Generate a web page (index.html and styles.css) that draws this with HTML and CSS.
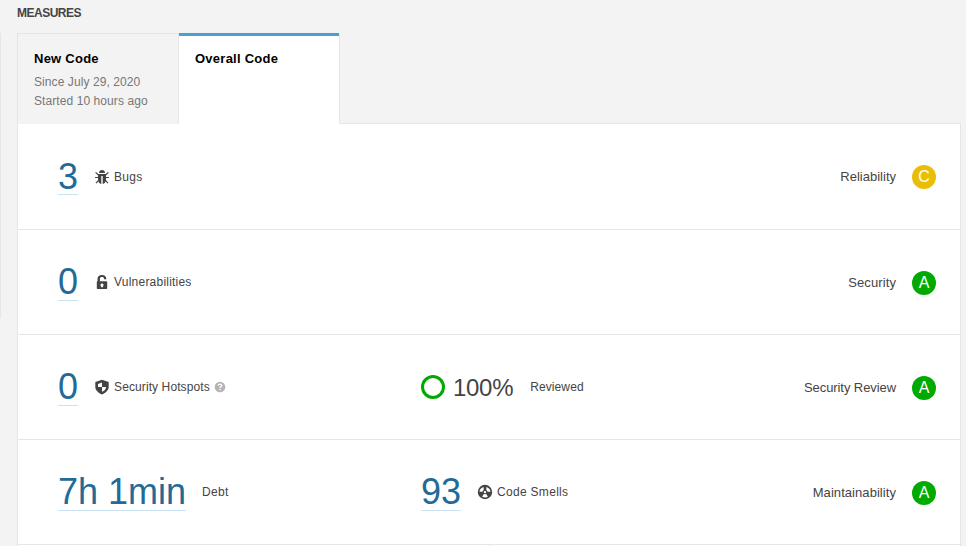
FILE: index.html
```html
<!DOCTYPE html>
<html lang="en">
<head>
<meta charset="utf-8">
<title>Measures</title>
<link rel="stylesheet" href="styles.css">
</head>
<body>
<div class="page">
  <aside class="side"></aside>
  <main class="main">
    <h2 class="heading">MEASURES</h2>
    <nav class="tabs">
      <div class="tab">
        <div class="tab-title">New Code</div>
        <div class="tab-note">Since July 29, 2020</div>
        <div class="tab-note">Started 10 hours ago</div>
      </div>
      <div class="tab active"><div class="tab-title overall">Overall Code</div></div>
    </nav>
    <section class="panel">
      <div class="row first">
        <div class="cell">
          <a class="value">3</a>
          <svg class="icon" viewBox="0 0 16 16"><path d="M5 4.100C5 2 6.300 1 8 1s3 1 3 3.100zM4 4.900h8v5.300c0 2.800-1.300 4.500-3.300 4.800V7H7.300v8C5.300 14.700 4 13 4 10.200z"/><path class="legs" d="M1.600 3.400 4.500 6M14.400 3.400 11.500 6M1 8.500h3.500M15 8.500h-3.500M2 14.100l2.800-3M14 14.100l-2.800-3"/></svg>
          <span class="label bugs">Bugs</span>
        </div>
        <div class="rating-cell"><span class="domain reliability">Reliability</span><span class="rating c">C</span></div>
      </div>
      <div class="row">
        <div class="cell">
          <a class="value">0</a>
          <svg class="icon" viewBox="0 0 16 16"><path fill-rule="evenodd" d="M3.500 7.300V5C3.500 2.400 5.300 1 8 1s4.300 1.400 4.300 3.700v.6H10v-.5C10 3.700 9.200 3.100 8 3.100S5.900 3.700 5.900 5v2.300h6.600q.7 0 .7.7v6.300q0 .7-.7.7H3.500q-.7 0-.7-.7V8q0-.7.7-.7zM8 9.400a1.600 1.600 0 0 0-.9 2.900v.9h1.800v-.9A1.600 1.600 0 0 0 8 9.400z"/></svg>
          <span class="label vulnerabilities">Vulnerabilities</span>
        </div>
        <div class="rating-cell"><span class="domain security">Security</span><span class="rating">A</span></div>
      </div>
      <div class="row">
        <div class="cell">
          <a class="value">0</a>
          <svg class="icon" viewBox="0 0 16 16"><path fill-rule="evenodd" d="M8 .7 14.700 3v5c0 3.600-3.500 6.200-6.700 7.600C4.800 14.200 1.300 11.600 1.300 8V3zM8 3.600 4 4.900V8h4zM8 8v4.800c2.200-1 4-2.500 4-4.800z"/></svg>
          <span class="label hotspots">Security Hotspots</span>
          <svg class="help" viewBox="0 0 12 12"><circle cx="6" cy="6" r="5.300"/><path d="M4.300 4.800C4.300 2.600 7.800 2.700 7.700 4.600 7.700 5.700 6 5.600 6 7.100M6 8v1.300"/></svg>
        </div>
        <div class="cell second">
          <span class="ring"></span><span class="percent">100%</span><span class="label reviewed">Reviewed</span>
        </div>
        <div class="rating-cell"><span class="domain review">Security Review</span><span class="rating">A</span></div>
      </div>
      <div class="row">
        <div class="cell">
          <a class="value">7h 1min</a>
          <span class="label debt-label">Debt</span>
        </div>
        <div class="cell second">
          <a class="value">93</a>
          <svg class="icon" viewBox="0 0 16 16"><path fill-rule="evenodd" d="M8 .8a7.200 7.200 0 1 0 0 14.400A7.200 7.200 0 0 0 8 .8zM6.600 2.900 6.700 6.100 5.200 7.700H2.500C2.700 5.300 4.300 3.500 6.600 2.900zM9.400 2.900c2.300.6 3.900 2.400 4.100 4.800h-2.700L9.300 6.100zM8 10.100l1.400.2 1.500 2.400q-2.900 1.500-5.800 0l1.500-2.400zM8 6.900a1.200 1.200 0 1 0 0 2.400A1.200 1.200 0 0 0 8 6.900z"/></svg>
          <span class="label smells">Code Smells</span>
        </div>
        <div class="rating-cell"><span class="domain maintainability">Maintainability</span><span class="rating">A</span></div>
      </div>
      <div class="split"></div>
    </section>
  </main>
</div>
</body>
</html>
```
FILE: styles.css
```css
* { box-sizing: border-box; }
body { margin: 0; background: #f3f3f3; color: #444; font: 12px/18px "Liberation Sans", Arial, sans-serif; overflow: hidden; }
.page { display: flex; height: 546px; overflow: hidden; }
.side { width: 1px; height: 285px; margin-top: 33px; background: #e6e6e6; }
.main { width: 944px; margin-left: 16px; }
.heading { margin: 0; height: 33px; padding-top: 4px; font-size: 12px; line-height: 18px; letter-spacing: -.5px; }
.tabs { display: flex; height: 90px; }
.tab { position: relative; width: 162px; height: 91px; padding: 15px 16px 0; background: #f3f3f3; border: 1px solid #e6e6e6; border-bottom: 0; }
.tab.active { width: 161px; padding-top: 16px; background: #fff; border-top: 0; border-left: 0; box-shadow: inset 0 3px #4b9fd5; }
.tab-title { font-size: 13px; font-weight: bold; line-height: 20px; color: #000; margin-bottom: 4px; letter-spacing: .25px; white-space: nowrap; }
.tab-note { color: #777; line-height: 19px; letter-spacing: .08px; white-space: nowrap; }
.panel { height: 500px; background: #fff; border: 1px solid #e6e6e6; }
.row { display: flex; align-items: center; height: 105px; padding: 0 24px 0 40px; border-bottom: 1px solid #e6e6e6; }
.row.first { height: 106px; }
.cell { display: flex; align-items: center; width: 363px; }
.value { height: 38px; line-height: 38px; font-size: 36px; color: #236a97; border-bottom: 1px solid #cae3f2; margin-right: 16px; white-space: nowrap; }
.first .value { height: 37px; }
.icon { width: 16px; height: 16px; fill: #444; margin-right: 4px; flex: none; }
.legs { fill: none; stroke: #444; stroke-width: 1.200; }
.label { white-space: nowrap; letter-spacing: .1px; }
.bugs, .debt-label { letter-spacing: .3px; }
.vulnerabilities { letter-spacing: .22px; }
.smells { letter-spacing: .3px; }
.help { width: 12px; height: 12px; margin-left: 4px; }
.help circle { fill: #b4b4b4; }
.help path { fill: none; stroke: #fff; stroke-width: 1.400; }
.ring { width: 24px; height: 24px; border: 3px solid #0a0; border-radius: 50%; margin-right: 8px; }
.percent { font-size: 24px; margin-right: 17px; padding-top: 2px; letter-spacing: -.3px; }
.rating-cell { display: flex; align-items: center; margin-left: auto; padding-top: 2px; font-size: 13px; }
.first .rating-cell { padding-top: 0; }
.domain { margin-right: 16px; white-space: nowrap; }
.security { letter-spacing: .1px; }
.review { letter-spacing: -.08px; }
.maintainability { letter-spacing: .06px; }
.rating { width: 24px; height: 24px; border-radius: 50%; background: #0a0; color: #fff; font-size: 16px; line-height: 24px; text-align: center; }
.rating.c { background: #eabe06; }
.split { width: 472px; height: 20px; border-right: 1px solid #e6e6e6; }
```
